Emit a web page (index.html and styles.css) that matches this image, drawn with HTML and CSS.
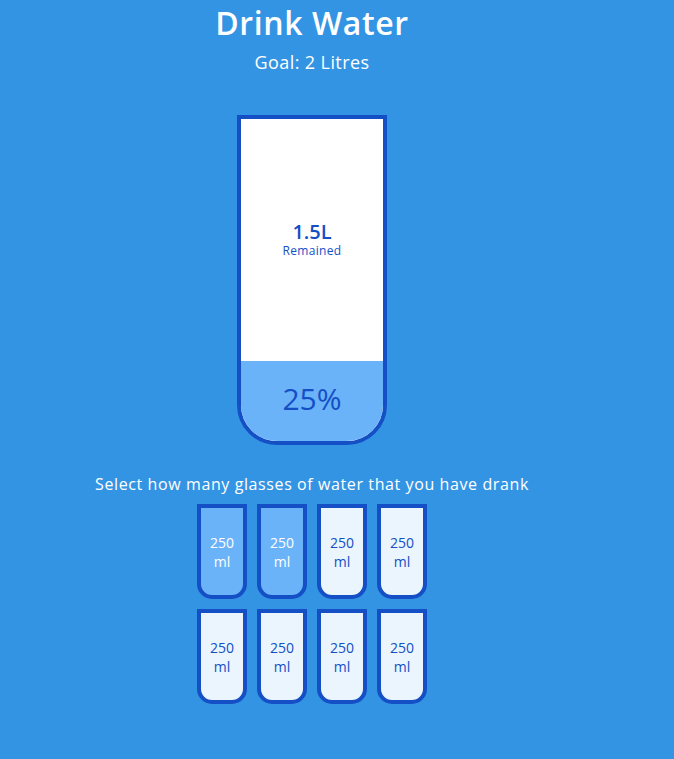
FILE: index.html
```html
<!DOCTYPE html>
<html lang="en">
<head>
<meta charset="UTF-8">
<title>Drink Water</title>
<link rel="stylesheet" href="styles.css">
</head>
<body>
<main class="app">
  <h1 class="title">Drink Water</h1>
  <h3 class="goal">Goal: 2 Litres</h3>
  <div class="cup">
    <div class="remained">
      <span class="liters">1.5L</span>
      <small class="remained-label">Remained</small>
    </div>
    <div class="percentage" style="height: 25%">25%</div>
  </div>
  <p class="text">Select how many glasses of water that you have drank</p>
  <div class="cups">
    <div class="cup-small full">250<br>ml</div>
    <div class="cup-small full">250<br>ml</div>
    <div class="cup-small">250<br>ml</div>
    <div class="cup-small">250<br>ml</div>
    <div class="cup-small">250<br>ml</div>
    <div class="cup-small">250<br>ml</div>
    <div class="cup-small">250<br>ml</div>
    <div class="cup-small">250<br>ml</div>
  </div>
</main>
</body>
</html>
```

FILE: styles.css
```css
* { box-sizing: border-box; }
html, body {
  margin: 0;
  background: #3494e4;
}
body {
  color: #fff;
  font-family: "Open Sans", "Noto Sans", sans-serif;
  min-height: 759px;
}
.app {
  width: 624px;
  display: flex;
  flex-direction: column;
  align-items: center;
}
.title {
  font-size: 32px;
  font-weight: 600;
  line-height: 40px;
  letter-spacing: 0.6px;
  margin: 3px 0 0;
}
.goal {
  font-size: 18px;
  font-weight: 400;
  line-height: 24px;
  letter-spacing: 0.4px;
  margin: 7px 0 0;
}
.cup {
  width: 150px;
  height: 330px;
  margin-top: 41px;
  border: 4px solid #144fc6;
  border-radius: 0 0 40px 40px;
  background: #fff;
  color: #144fc6;
  display: flex;
  flex-direction: column;
  overflow: hidden;
}
.remained {
  flex: 1;
  display: flex;
  flex-direction: column;
  align-items: center;
  justify-content: center;
}
.liters {
  font-size: 20px;
  font-weight: 600;
  line-height: 22px;
}
.remained-label {
  font-size: 12px;
  line-height: 16px;
  letter-spacing: 0.3px;
}
.percentage {
  background: #6ab3f8;
  display: flex;
  align-items: center;
  justify-content: center;
  font-size: 30px;
  font-weight: 500;
  padding-bottom: 4px;
}
.text {
  font-size: 16px;
  line-height: 20px;
  letter-spacing: 0.6px;
  margin: 29px 0 0;
  text-align: center;
}
.cups {
  width: 280px;
  margin-top: 5px;
  display: flex;
  flex-wrap: wrap;
  justify-content: center;
}
.cup-small {
  width: 50px;
  height: 95px;
  margin: 5px;
  border: 4px solid #144fc6;
  border-radius: 0 0 15px 15px;
  background: rgba(255, 255, 255, 0.9);
  color: #144fc6;
  font-size: 14px;
  line-height: 19px;
  display: flex;
  align-items: center;
  justify-content: center;
  text-align: center;
  cursor: pointer;
}
.cup-small.full {
  background: #6ab3f8;
  color: #fff;
}
```
